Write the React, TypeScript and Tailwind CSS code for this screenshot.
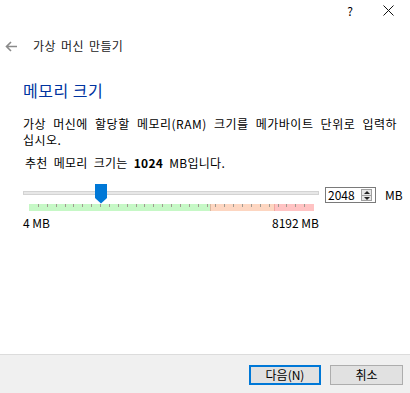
const font = { fontFamily: '"Noto Sans CJK KR", "Noto Sans", sans-serif' }

function BackArrow() {
    return (
        <svg width="13" height="11" viewBox="0 0 13 11" className="text-[#8a8a8a]">
            <path d="M12 5.5H1.5M6 1L1.5 5.5L6 10" fill="none" stroke="currentColor" strokeWidth="1.6" />
        </svg>
    )
}

function Thumb() {
    return (
        <svg width="12" height="20" viewBox="0 0 12 20">
            <polygon points="0,0 12,0 12,14 6,19.5 0,14" fill="#0078d7" />
        </svg>
    )
}

function SpinBox() {
    return (
        <div className="w-[51px] h-[16px] border border-[#7a7a7a] bg-white flex items-center justify-between pl-[2px] pr-[3px]">
            <span className="text-[12px] leading-[14px] text-black">2048</span>
            <div className="w-[11px] h-[12px] border border-[#a0a0a0] bg-[#e6e6e6] flex flex-col items-center justify-around">
                <svg width="6" height="3" viewBox="0 0 6 3">
                    <polygon points="0,3 3,0 6,3" fill="#222" />
                </svg>
                <div className="w-[9px] h-px bg-[#a0a0a0]" />
                <svg width="6" height="3" viewBox="0 0 6 3">
                    <polygon points="0,0 6,0 3,3" fill="#222" />
                </svg>
            </div>
        </div>
    )
}

function App() {
    const ticks = Array.from({ length: 33 }, (_, i) => i)

    return (
        <div className="w-[410px] h-[393px] flex flex-col bg-white text-black overflow-hidden" style={font}>
            {/* title bar */}
            <div className="h-[20px] flex items-center justify-end pr-[16px] pt-[1px]">
                <span className="text-[12px] leading-[14px] mr-[30px]">?</span>
                <svg width="11" height="11" viewBox="0 0 11 11">
                    <path d="M0.5 0.5L10.5 10.5M10.5 0.5L0.5 10.5" stroke="#111" strokeWidth="1" />
                </svg>
            </div>

            {/* header */}
            <div className="h-[20px] mt-[16px] pl-[5px] flex items-center">
                <BackArrow />
                <span className="ml-[15px] text-[12px] leading-[16px] text-[#1a1a1a] tracking-[0.4px] [word-spacing:2px]">
                    가상 머신 만들기
                </span>
            </div>

            <div className="pl-[23px] mt-[24px] text-[16px] leading-[20px] text-[#0033a0] tracking-[0.5px]">메모리 크기</div>

            <p className="pl-[23px] mt-[16px] text-[12px] leading-[16px] tracking-[0.5px] [word-spacing:4px] whitespace-nowrap">
                가상 머신에 할당할 메모리(RAM) 크기를 메가바이트 단위로 입력하
                <br />
                십시오.
            </p>
            <p className="pl-[25px] mt-[7px] text-[12px] leading-[16px] tracking-[0.3px] [word-spacing:3px]">
                추천 메모리 크기는 <b>1024</b> MB입니다.
            </p>

            {/* slider row */}
            <div className="flex mt-[13px] pl-[23px]">
                <div className="w-[296px] flex flex-col">
                    <div className="relative h-[20px]">
                        <div className="absolute left-0 right-0 top-[7px] h-[4px] bg-[#e7e7e7] border border-[#d3d3d3]" />
                        <div className="absolute left-[72px] top-0">
                            <Thumb />
                        </div>
                    </div>
                    <div className="relative ml-[6px] w-[285px] h-[7px] flex">
                        <div className="w-[181px] bg-[#c6f8c6]" />
                        <div className="w-px bg-[#d9b79f]" />
                        <div className="w-[63px] bg-[#fdd6c1]" />
                        <div className="w-px bg-[#f0a8a0]" />
                        <div className="flex-1 bg-[#ffc3c3]" />
                        <div className="absolute inset-x-0 top-0 h-[3px] flex justify-between">
                            {ticks.map((i) => (
                                <div
                                    key={i}
                                    className={i === 0 || i === 32 ? 'w-px h-full' : 'w-px h-full bg-[#a09a90]'}
                                />
                            ))}
                        </div>
                    </div>
                    <div className="mt-[4px] flex justify-between text-[12px] leading-[16px]">
                        <span>4 MB</span>
                        <span>8192 MB</span>
                    </div>
                </div>
                <div className="ml-[6px] mt-[3px] h-[16px] flex items-center">
                    <SpinBox />
                    <span className="ml-[9px] text-[12px] leading-[16px]">MB</span>
                </div>
            </div>

            {/* bottom buttons */}
            <div className="mt-auto h-[39px] border-t border-[#dcdcdc] bg-[#f0f0f0] flex items-start justify-end pt-[10px] pr-[7px] gap-[9px]">
                <button className="w-[72px] h-[20px] border-2 border-[#0078d7] bg-[#e1e1e1] text-[12px] leading-[14px] flex items-center justify-center">
                    다음(N)
                </button>
                <button className="w-[73px] h-[20px] border border-[#adadad] bg-[#e1e1e1] text-[12px] leading-[14px] flex items-center justify-center">
                    취소
                </button>
            </div>
        </div>
    )
}

export default App
